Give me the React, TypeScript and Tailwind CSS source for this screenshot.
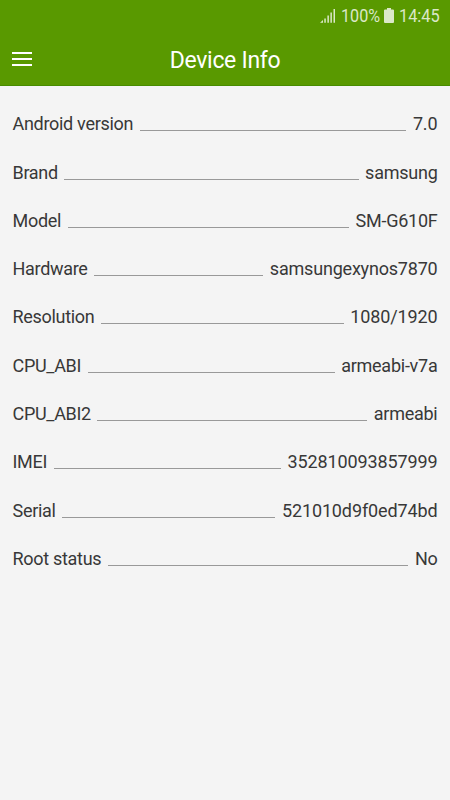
const rows: [string, string][] = [
  ["Android version", "7.0"],
  ["Brand", "samsung"],
  ["Model", "SM-G610F"],
  ["Hardware", "samsungexynos7870"],
  ["Resolution", "1080/1920"],
  ["CPU_ABI", "armeabi-v7a"],
  ["CPU_ABI2", "armeabi"],
  ["IMEI", "352810093857999"],
  ["Serial", "521010d9f0ed74bd"],
  ["Root status", "No"],
];

function valueTracking(value: string) {
  if (/^\d/.test(value)) return "tracking-[-0.12px]";
  if (/\d{4}$/.test(value)) return "tracking-[-0.2px]";
  return "tracking-[-0.25px]";
}

export default function App() {
  return (
    <div className="flex h-[800px] w-[450px] flex-col overflow-hidden bg-[#f4f4f4] font-['Roboto',sans-serif] text-[#383838]">
      <header className="h-[86px] border-b border-[#488c00] bg-[#599900] text-white">
        <div className="flex h-8 items-center justify-end pr-[10px] text-[19px] leading-8 text-[#dbe8c8]">
          <svg width="16" height="16" viewBox="0 0 16 16" fill="currentColor" className="mr-[5px]">
            <path d="M0 14.8 3 12v2.8zM4.3 10.5h1.5v4.3H4.3zM7.4 7.5h1.5v7.3H7.4zM10.4 4.5h1.5v10.3h-1.5zM13.5 1H15v13.8h-1.5z" />
          </svg>
          <span className="w-10"><span className="inline-block origin-left scale-x-[.85]">100%</span></span>
          <svg width="10" height="15" viewBox="0 0 10 15" fill="currentColor" className="relative -top-px ml-[3px] mr-[5px]">
            <path d="M3 0h4v1.5h2.3l.7.7V14.3l-.7.7H.7l-.7-.7V2.2l.7-.7H3z" />
          </svg>
          <span className="w-[41px]"><span className="inline-block origin-left scale-x-[.86]">14:45</span></span>
        </div>
        <div className="grid h-[53px] grid-cols-[60px_1fr_60px] items-center">
          <svg width="20" height="16" viewBox="0 0 20 16" fill="currentColor" className="mb-[2px] ml-3">
            <path d="M0 1h20v2H0zM0 7h20v2H0zM0 13h20v2H0z" />
          </svg>
          <h1 className="pt-[2px] text-center text-[23px] leading-[53px] tracking-[-0.3px]">Device Info</h1>
        </div>
      </header>
      <main className="px-[12.5px] pt-[14.3px]">
        {rows.map(([label, value]) => (
          <div key={label} className="flex h-[48.3px] items-start text-[18px] leading-[48px]">
            <span className="tracking-[-0.3px]">{label}</span>
            <div className="mx-[6.5px] mt-[30px] h-px flex-1 bg-[#999999]" />
            <span className={valueTracking(value)}>{value}</span>
          </div>
        ))}
      </main>
    </div>
  );
}
